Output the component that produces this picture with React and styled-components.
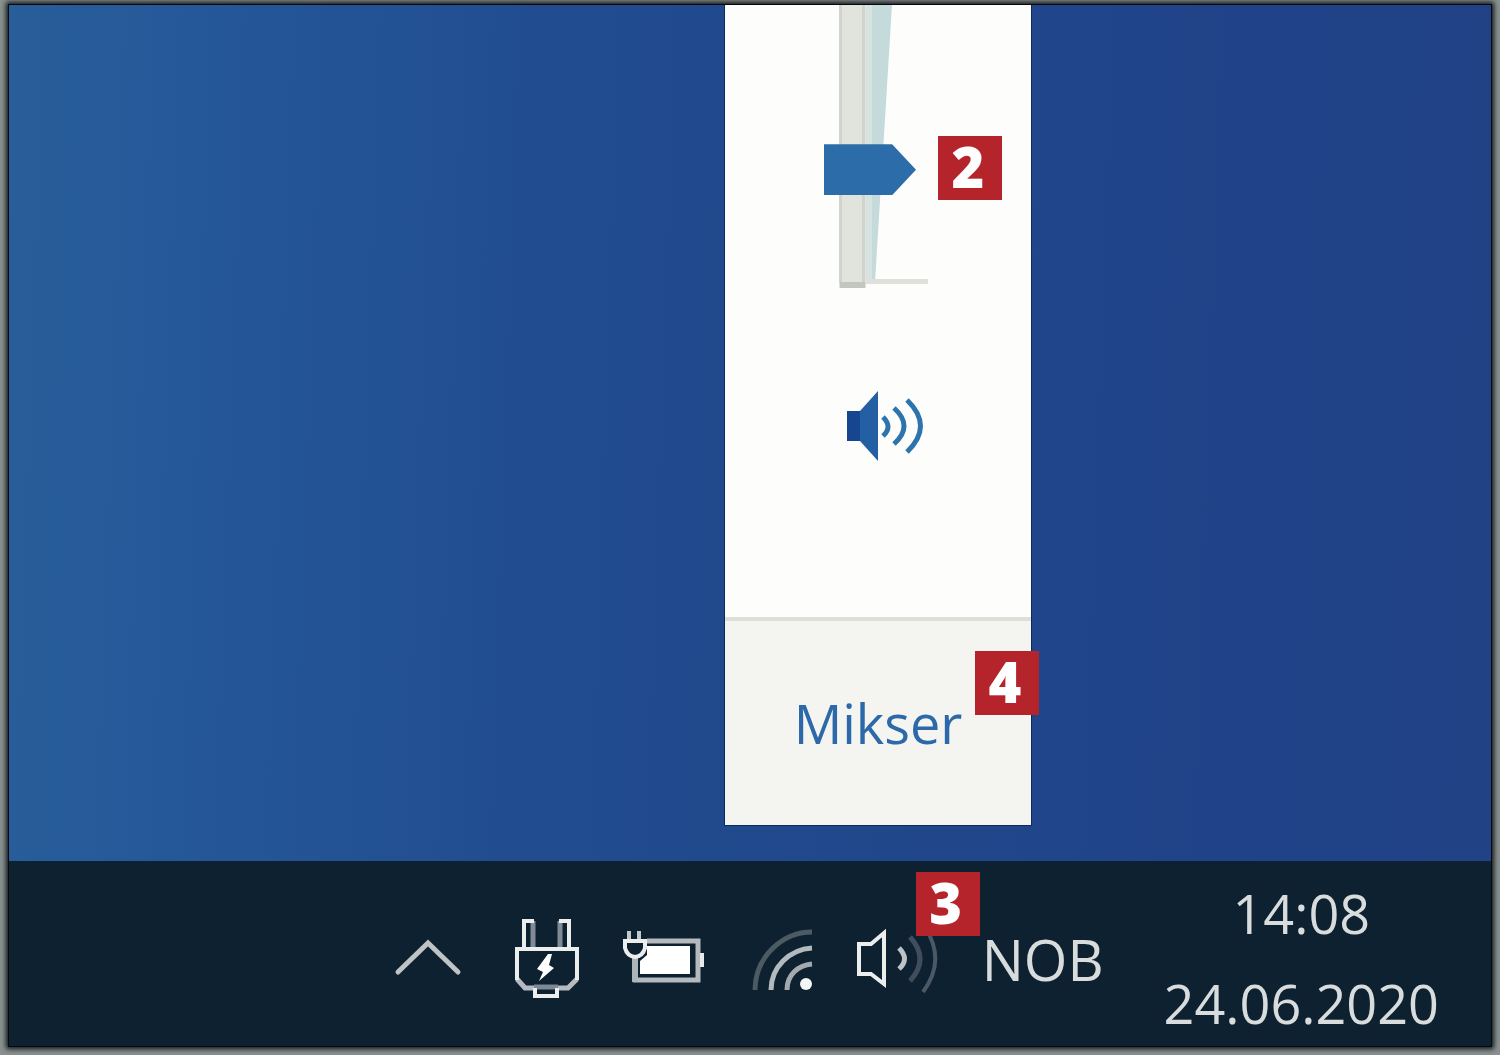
import { useState } from "react";
import styled, { createGlobalStyle } from "styled-components";

const GlobalStyle = createGlobalStyle`
  * {
    box-sizing: border-box;
  }
  body {
    margin: 0;
    background: #8a9291;
    font-family: "Open Sans", "Noto Sans", sans-serif;
  }
  button {
    margin: 0;
    padding: 0;
    border: 0;
    background: none;
    color: inherit;
    font: inherit;
    cursor: pointer;
  }
  svg {
    display: block;
  }
`;

const Frame = styled.div`
  display: flex;
  min-height: 100vh;
  padding: 4px 8px 8px;
`;

const Screen = styled.main`
  flex: 1;
  display: flex;
  flex-direction: column;
  border: 1px solid #04090f;
  box-shadow: 0 0 5px 2px #101414;
`;

const Desktop = styled.section`
  flex: 1;
  display: flex;
  justify-content: flex-end;
  padding: 0 459px 35px 0;
  background: linear-gradient(
    92deg,
    #285e9a 0%,
    #255899 12%,
    #214d90 35%,
    #21478b 60%,
    #204288 85%,
    #214285 100%
  );
`;

const Flyout = styled.div`
  width: 308px;
  display: flex;
  flex-direction: column;
  border: solid #0c2a5c;
  border-width: 0 1px 1px;
  background: #fdfefc;
`;

const VolumeArea = styled.div`
  position: relative;
  flex: 1;
  display: flex;
  flex-direction: column;
  align-items: center;
  gap: 98px;
`;

const FlyoutFooter = styled.div`
  position: relative;
  height: 208px;
  display: flex;
  align-items: center;
  justify-content: center;
  border-top: 4px solid #dddfd8;
  background: #f4f4f1;
`;

const MixerButton = styled.button`
  color: #2c69a8;
  font-size: 54px;
  line-height: 72px;
`;

const Badge = styled.span`
  position: absolute;
  top: ${({ $top }) => $top}px;
  right: ${({ $right }) => $right}px;
  width: 64px;
  height: 64px;
  padding-right: 4px;
  background: #b5232b;
  color: #fff;
  font-size: 56px;
  font-weight: 800;
  line-height: 60px;
  text-align: center;
`;

const SliderBox = styled.div`
  display: grid;
  > * {
    grid-area: 1 / 1;
  }
`;

const Slider = styled.input`
  appearance: none;
  writing-mode: vertical-lr;
  direction: rtl;
  width: 92px;
  height: 283px;
  margin: 0;
  background: transparent;
  &::-webkit-slider-runnable-track {
    width: 92px;
    background: transparent;
  }
  &::-webkit-slider-thumb {
    appearance: none;
    width: 92px;
    height: 51px;
    border: 0;
    border-radius: 0;
    background: #2c6ca9;
    clip-path: polygon(0 0, 74% 0, 100% 50%, 74% 100%, 0 100%);
  }
`;

const Taskbar = styled.footer`
  height: 185px;
  display: flex;
  align-items: center;
  justify-content: flex-end;
  gap: 40px;
  padding-right: 52px;
  background: #0d2130;
  color: #d9dcdc;
`;

const TrayButton = styled.button`
  position: relative;
`;

const Language = styled.button`
  padding-top: 10px;
  font-size: 56px;
  line-height: 72px;
`;

const Clock = styled.button`
  margin-left: 20px;
  padding-top: 8px;
  font-size: 54px;
  line-height: 90px;
  text-align: center;
`;

const ClockLine = styled.time`
  display: block;
`;

const SliderTrack = () => (
  <svg width="108" height="283" viewBox="0 0 108 283" aria-hidden="true">
    <path d="M42 0h26L51 277h-9z" fill="#c5dbdb" />
    <path d="M42 0h6v277h-6z" fill="#d6e3e1" />
    <path d="M42 274h62v5H42z" fill="#dfe0dc" />
    <path d="M15 0h27v283H15z" fill="#e0e4dd" />
    <path d="M15 0h3v278h-3zM38 0h3v278h-3z" fill="#d0d4cd" />
    <path d="M16 277h25v6H16z" fill="#c2c6bf" />
  </svg>
);

const SpeakerIcon = () => (
  <svg width="96" height="80" viewBox="0 0 96 80" aria-hidden="true">
    <path d="M30 25L48 5v70L30 55z" fill="#245fa3" />
    <path d="M17 25h13v30H17z" fill="#15468f" />
    <g fill="none" stroke="#2d74ad" strokeWidth="5">
      <path d="M53 31q10 10 0 19" />
      <path d="M64 22q20 18 0 36" />
      <path d="M77 14q27 26 0 52" />
    </g>
  </svg>
);

const ChevronIcon = () => (
  <svg width="74" height="90" viewBox="0 0 74 90" fill="none" aria-hidden="true">
    <path d="M6 63L36 34L66 63" stroke="#bfc3c4" strokeWidth="5" strokeLinecap="round" />
  </svg>
);

const PlugIcon = () => (
  <svg width="76" height="90" viewBox="0 0 76 90" fill="none" aria-hidden="true">
    <path d="M27 12v26M54 12v26" stroke="#808b96" strokeWidth="5" />
    <path d="M18 38V12h10M53 12h10v26" stroke="#eceeee" strokeWidth="4" />
    <path d="M11 70l8 9h9M52 79h10l9-9" stroke="#b4bac0" strokeWidth="5" />
    <path d="M28 78h24" stroke="#7d8994" strokeWidth="5" />
    <path d="M11 71V40h60v31" stroke="#eceeee" strokeWidth="4" />
    <path d="M29 79v8h22v-8" stroke="#eceeee" strokeWidth="4" />
    <path d="M42 45L31 60l6 3-4 9 15-13-5-3 3-11z" fill="#fff" />
  </svg>
);

const BatteryIcon = () => (
  <svg width="86" height="90" viewBox="0 0 86 90" fill="none" aria-hidden="true">
    <path d="M25 32h51v39H11" stroke="#b4babd" strokeWidth="5" />
    <path d="M25 37h43v28H18V52l7-6z" fill="#fff" />
    <path d="M78 44h4v14h-4z" fill="#e8eaea" />
    <path d="M7 22v9M17 22v9" stroke="#c4c9cb" strokeWidth="4" />
    <path d="M13 47v26" stroke="#aeb5b9" strokeWidth="6" />
    <path d="M3 32h20v7q-2 8-10 9-8-1-10-9z" fill="#0d2130" stroke="#eceeee" strokeWidth="4" />
  </svg>
);

const WifiIcon = () => (
  <svg width="68" height="90" viewBox="0 0 68 90" fill="none" strokeWidth="5" aria-hidden="true">
    <path d="M7 81q0-24 17-41t40-17" stroke="#4c5a64" />
    <path d="M23 81q0-17 12-29t29-13" stroke="#b3babe" />
    <path d="M39 81q0-11 7-18t18-8" stroke="#a2aaaf" />
    <circle cx="58" cy="75" r="6" fill="#f4f5f5" />
  </svg>
);

const TrayVolumeIcon = () => (
  <svg width="86" height="90" viewBox="0 0 86 90" fill="none" strokeWidth="4" aria-hidden="true">
    <path d="M3 35h12l13-11v51L15 65H3z" stroke="#eceeee" />
    <path d="M43 39q11 11 0 21" stroke="#bcc2c6" strokeWidth="5" />
    <path d="M54 28q20 22 0 44" stroke="#3f4e5a" strokeWidth="5" />
    <path d="M70 20q20 32-3 63" stroke="#4b5965" />
  </svg>
);

const VolumeFlyout = () => {
  const [volume, setVolume] = useState(40);

  return (
    <Flyout>
      <VolumeArea>
        <SliderBox>
          <SliderTrack />
          <Slider
            type="range"
            min="0"
            max="100"
            aria-label="Volum"
            value={volume}
            onChange={(e) => setVolume(e.target.value)}
          />
        </SliderBox>
        <button aria-label="Demp">
          <SpeakerIcon />
        </button>
        <Badge $top={131} $right={29}>2</Badge>
      </VolumeArea>
      <FlyoutFooter>
        <MixerButton>Mikser</MixerButton>
        <Badge $top={30} $right={-8}>4</Badge>
      </FlyoutFooter>
    </Flyout>
  );
};

const App = () => (
  <>
    <GlobalStyle />
    <Frame>
      <Screen>
        <Desktop>
          <VolumeFlyout />
        </Desktop>
        <Taskbar>
          <TrayButton aria-label="Vis skjulte ikoner">
            <ChevronIcon />
          </TrayButton>
          <TrayButton aria-label="Lader">
            <PlugIcon />
          </TrayButton>
          <TrayButton aria-label="Batteri">
            <BatteryIcon />
          </TrayButton>
          <TrayButton aria-label="Nettverk">
            <WifiIcon />
          </TrayButton>
          <TrayButton aria-label="Lyd">
            <TrayVolumeIcon />
            <Badge $top={-37} $right={-38}>3</Badge>
          </TrayButton>
          <Language>NOB</Language>
          <Clock>
            <ClockLine>14:08</ClockLine>
            <ClockLine dateTime="2020-06-24">24.06.2020</ClockLine>
          </Clock>
        </Taskbar>
      </Screen>
    </Frame>
  </>
);

export default App;
